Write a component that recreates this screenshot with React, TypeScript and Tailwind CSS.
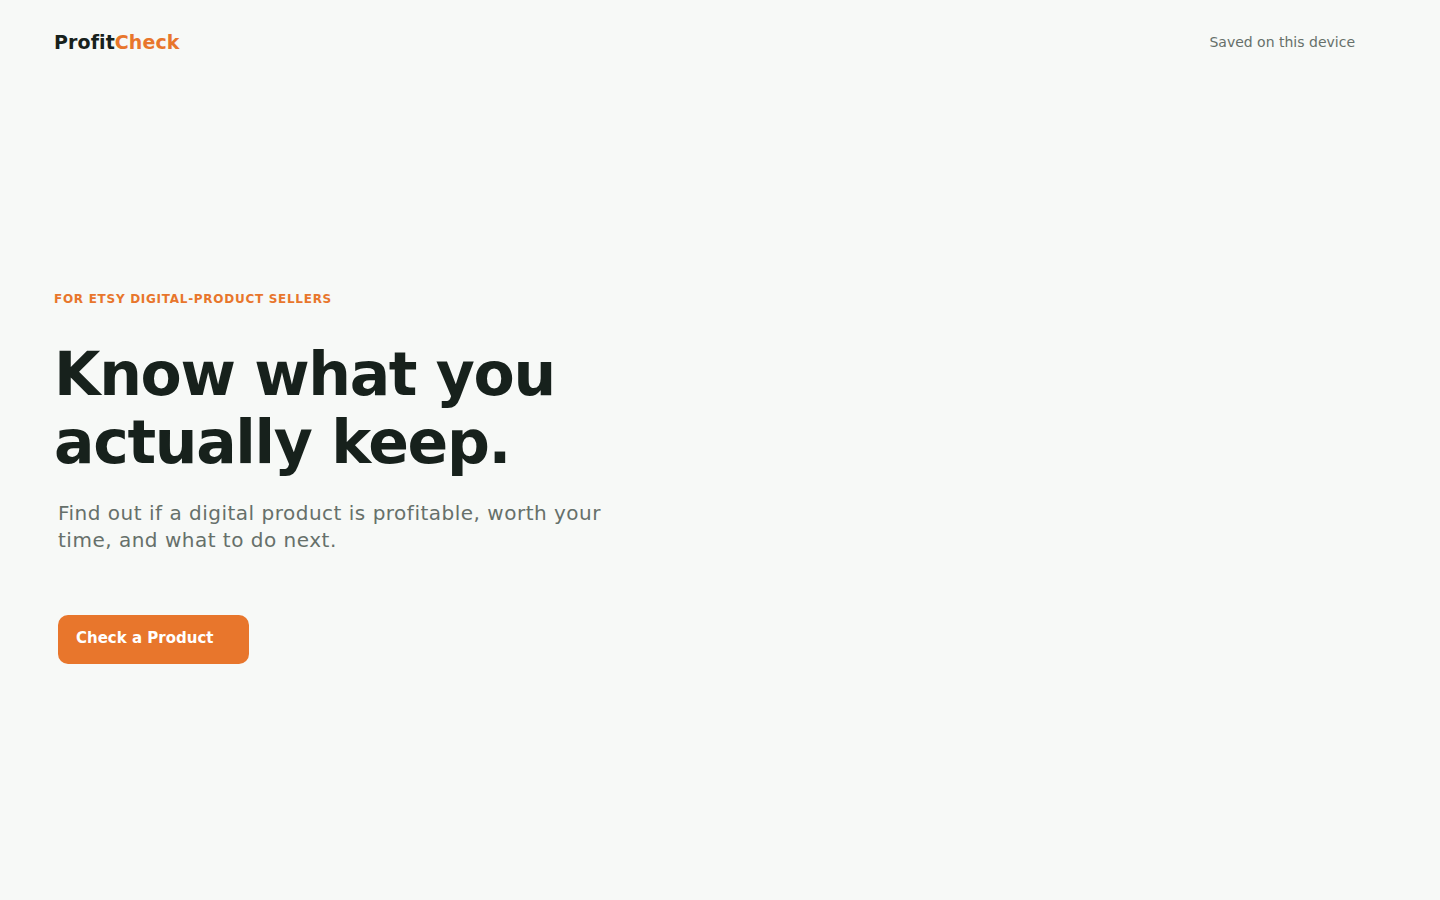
export default function App() {
  return (
    <div className="min-h-screen bg-[#f7f9f7] text-[#17211c]" style={{ fontFamily: '"DejaVu Sans", sans-serif' }}>
      <header className="flex items-center justify-between pl-[54px] pr-[85px] pt-[29px]">
        <a href="#" className="text-[19px] font-bold leading-[26px] tracking-[0.1px]">
          Profit<span className="text-[#e8762c]">Check</span>
        </a>
        <span className="text-[14px] leading-[26px] text-[#66706a]">Saved on this device</span>
      </header>

      <main className="pl-[54px] pt-[236px]">
        <p className="text-[12px] font-bold uppercase leading-[16px] tracking-[0.06em] text-[#e8762c]">
          For Etsy digital-product sellers
        </p>
        <h1 className="mt-[33px] text-[60px] font-bold leading-[68px] tracking-[-0.022em]">
          Know what you
          <br />
          actually keep.
        </h1>
        <p className="ml-[4px] mt-[24px] max-w-[560px] text-[20px] leading-[27px] tracking-[0.5px] text-[#66706a]">
          Find out if a digital product is profitable, worth your time, and what to do next.
        </p>
        <button className="ml-[4px] mt-[61px] h-[49px] w-[191px] rounded-[10px] bg-[#e8762c] pb-[3px] pl-[18px] text-left text-[15px] font-bold text-white">
          Check a Product
        </button>
      </main>
    </div>
  );
}
